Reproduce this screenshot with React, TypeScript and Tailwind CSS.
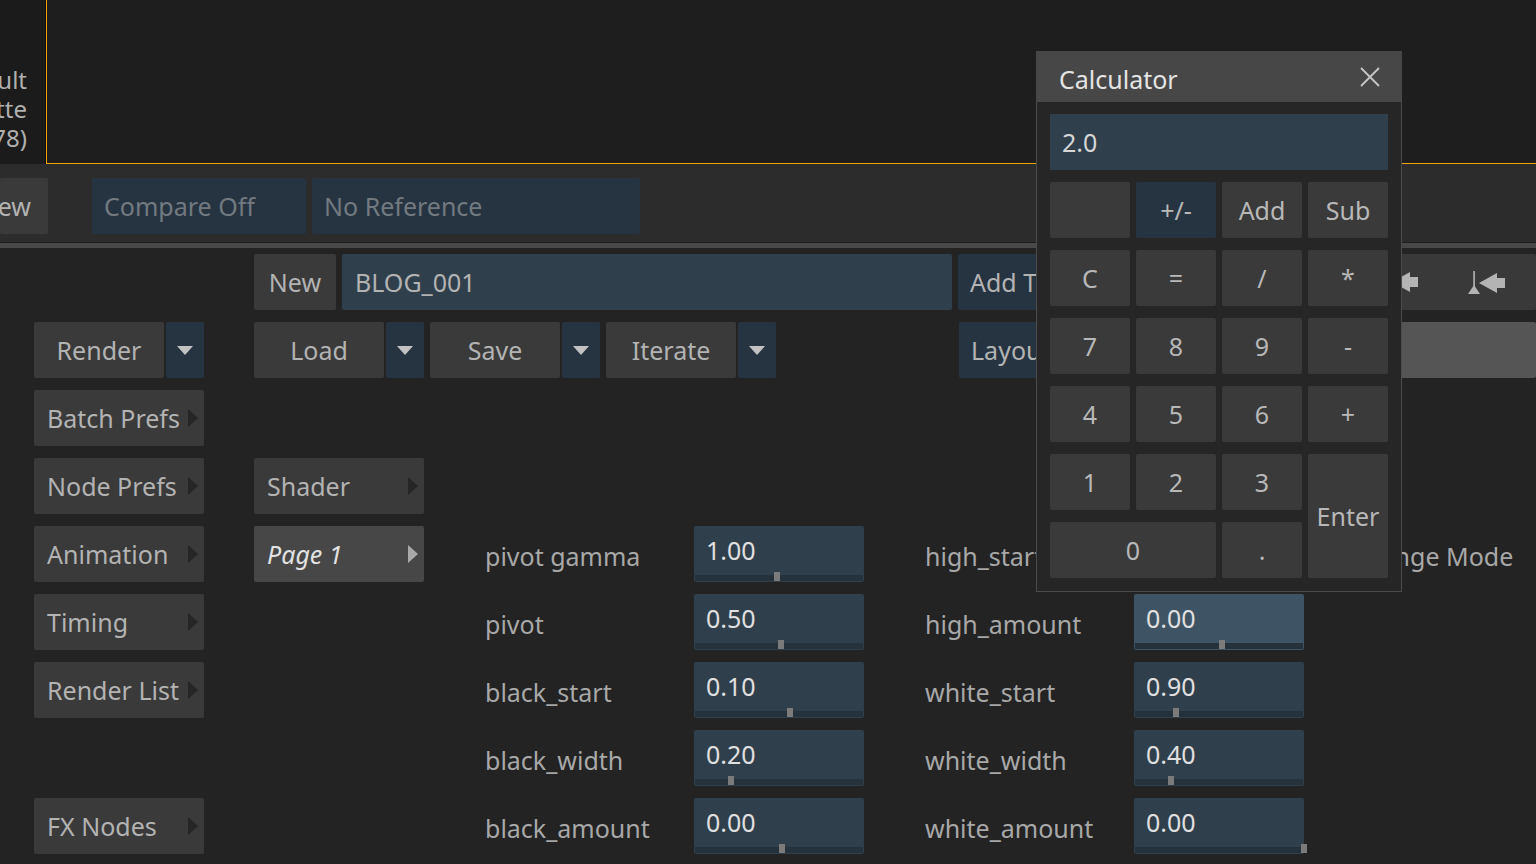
import React from 'react'

const btn = 'h-[56px] rounded-[2px] flex items-center whitespace-nowrap'

function DownTri() {
  return (
    <svg width="16" height="9" viewBox="0 0 16 9">
      <polygon points="0,0 16,0 8,9" fill="#c2c2c2" />
    </svg>
  )
}

function RightTri({ light }: { light?: boolean }) {
  return (
    <svg width="10" height="18" viewBox="0 0 10 18">
      <polygon points="0,0 10,9 0,18" fill={light ? '#a9a9a9' : '#262626'} />
    </svg>
  )
}

function Split({ label }: { label: string }) {
  return (
    <div className="flex gap-[2px] w-[170px]">
      <div className={`${btn} w-[130px] bg-[#3a3a3a] justify-center text-[#b3b3b3]`}>{label}</div>
      <div className={`${btn} w-[38px] bg-[#263442] justify-center`}>
        <DownTri />
      </div>
    </div>
  )
}

function SubMenu({ label, active }: { label: string; active?: boolean }) {
  return (
    <div
      className={`${btn} w-[170px] justify-between pl-[13px] pr-[6px] ${
        active ? 'bg-[#474747] text-[#e2e2e2] italic' : 'bg-[#3a3a3a] text-[#b3b3b3]'
      }`}
    >
      <span>{label}</span>
      <RightTri light={active} />
    </div>
  )
}

function Field({ value, tick, hi }: { value: string; tick: number; hi?: boolean }) {
  return (
    <div className={`w-[170px] h-[56px] rounded-[2px] flex flex-col ${hi ? 'bg-[#3e5464]' : 'bg-[#2f3f4b]'}`}>
      <div className="flex-1 flex items-center pl-[12px] text-[#e0e0e0]">{value}</div>
      <div className="relative h-[6px] mx-[1px] mb-[1px] bg-[#25323c]">
        <div className="absolute bottom-0 w-[6px] h-[9px] bg-[#7b7b7b]" style={{ left: tick }} />
      </div>
    </div>
  )
}

type Param = { label: string; value: string; tick: number; hi?: boolean }

const rows: {
  left?: string
  mid?: { label: string; active?: boolean }
  a?: Param
  b?: Param
  c?: string
}[] = [
  { left: 'Batch Prefs' },
  { left: 'Node Prefs', mid: { label: 'Shader' } },
  {
    left: 'Animation',
    mid: { label: 'Page 1', active: true },
    a: { label: 'pivot gamma', value: '1.00', tick: 79 },
    b: { label: 'high_start', value: '0.00', tick: 84 },
    c: 'Range Mode',
  },
  {
    left: 'Timing',
    a: { label: 'pivot', value: '0.50', tick: 83 },
    b: { label: 'high_amount', value: '0.00', tick: 84, hi: true },
  },
  {
    left: 'Render List',
    a: { label: 'black_start', value: '0.10', tick: 92 },
    b: { label: 'white_start', value: '0.90', tick: 38 },
  },
  {
    a: { label: 'black_width', value: '0.20', tick: 33 },
    b: { label: 'white_width', value: '0.40', tick: 33 },
  },
  {
    left: 'FX Nodes',
    a: { label: 'black_amount', value: '0.00', tick: 84 },
    b: { label: 'white_amount', value: '0.00', tick: 166 },
  },
]

const calcKeys = [
  ['', '+/-', 'Add', 'Sub'],
  ['C', '=', '/', '*'],
  ['7', '8', '9', '-'],
  ['4', '5', '6', '+'],
]

function Key({ k, className }: { k: string; className?: string }) {
  return (
    <div
      className={`h-[56px] rounded-[2px] flex items-center justify-center text-[#b8b8b8] ${
        k === '+/-' ? 'bg-[#263442]' : 'bg-[#3a3a3a]'
      } ${className ?? ''}`}
    >
      {k}
    </div>
  )
}

function Calculator() {
  return (
    <div className="absolute left-[1036px] top-[51px] w-[366px] bg-[#262626] border border-[#4b4b4b] border-t-0">
      {/* title */}
      <div className="h-[51px] bg-[#474747] flex items-center justify-between pl-[23px] pr-[22px] -mx-[1px]">
        <span className="text-[#e4e4e4] pt-[6px]">Calculator</span>
        <svg width="20" height="20" viewBox="0 0 20 20">
          <path d="M1 1 L19 19 M19 1 L1 19" stroke="#c6c6c6" strokeWidth="1.8" />
        </svg>
      </div>
      <div className="px-[13px] pt-[12px] pb-[13px]">
        <div className="h-[56px] bg-[#2f3f4b] flex items-center pl-[12px] text-[#d6d6d6]">2.0</div>
        <div className="mt-[12px] grid grid-cols-4 gap-x-[6px] gap-y-[12px]">
          {calcKeys.flat().map((k, i) => (
            <Key key={i} k={k} />
          ))}
          <Key k="1" />
          <Key k="2" />
          <Key k="3" />
          <Key k="Enter" className="row-span-2 h-[124px]" />
          <Key k="0" className="col-span-2" />
          <Key k="." />
        </div>
      </div>
    </div>
  )
}

export default function App() {
  return (
    <div className="relative w-[1536px] h-[864px] overflow-hidden bg-[#232323] font-['Noto_Sans',sans-serif] text-[25px] leading-none">
      {/* Viewer */}
      <div className="flex h-[164px]">
        <div className="w-[46px] bg-[#1b1b1b] border-r border-[#0f0f0f] flex flex-col items-end justify-end pb-[12px] pr-[18px] text-[24px] leading-[29px] text-[#b0b0b0] overflow-hidden whitespace-nowrap">
          <span>Result</span>
          <span>Matte</span>
          <span>(1278)</span>
        </div>
        <div className="flex-1 bg-[#1e1e1e] border-l border-b border-[#f1a300]" />
      </div>

      {/* Compare row */}
      <div className="h-[78px] bg-[#2c2c2c] flex pt-[14px] gap-[6px]">
        <div className={`${btn} w-[48px] bg-[#3a3a3a] justify-end pr-[17px] overflow-hidden text-[#b3b3b3]`}>View</div>
        <div className={`${btn} w-[214px] ml-[38px] bg-[#263442] pl-[12px] text-[#727a80]`}>Compare Off</div>
        <div className={`${btn} w-[328px] bg-[#263442] pl-[12px] text-[#727a80]`}>No Reference</div>
      </div>
      <div className="h-[12px] border-t border-[#1c1c1c] flex flex-col">
        <div className="h-[5px] bg-[#484848]" />
      </div>

      {/* Main */}
      <div className="flex flex-col gap-[12px]">
        <div className="flex gap-[6px] pl-[254px]">
          <div className={`${btn} w-[82px] bg-[#3a3a3a] justify-center text-[#b3b3b3]`}>New</div>
          <div className={`${btn} w-[610px] bg-[#2f3f4b] pl-[13px] text-[#b3b3b3]`}>BLOG_001</div>
          <div className={`${btn} w-[170px] bg-[#263442] pl-[12px] text-[#b3b3b3]`}>Add To Library</div>
          <div className={`${btn} flex-1 bg-[#393939] justify-end gap-[50px] pr-[31px]`}>
            <svg width="26" height="20" viewBox="0 0 26 20">
              <polygon points="0,10 18,0 18,5 26,5 26,15 18,15 18,20" fill="#b4b4b4" />
            </svg>
            <svg width="37" height="23" viewBox="0 0 37 23">
              <rect x="5.3" y="0" width="1.6" height="20" fill="#b4b4b4" />
              <polygon points="6,14 12,23 0,23" fill="#b4b4b4" />
              <polygon points="11,12 29,2 29,7 37,7 37,17 29,17 29,22" fill="#b4b4b4" />
            </svg>
          </div>
        </div>

        <div className="flex pl-[34px]">
          <Split label="Render" />
          <div className="flex gap-[6px] ml-[50px]">
            <Split label="Load" />
            <Split label="Save" />
            <Split label="Iterate" />
          </div>
          <div className={`${btn} w-[170px] ml-[183px] bg-[#263442] pl-[12px] text-[#b3b3b3]`}>Layout</div>
          <div className={`${btn} flex-1 ml-[6px] bg-[#555555]`} />
        </div>

        {rows.map((r, i) => (
          <div key={i} className="flex h-[56px] items-center pl-[34px] whitespace-nowrap">
            <div className="w-[170px]">{r.left && <SubMenu label={r.left} />}</div>
            <div className="w-[170px] ml-[50px]">{r.mid && <SubMenu label={r.mid.label} active={r.mid.active} />}</div>
            {r.a && (
              <>
                <div className="w-[209px] ml-[61px] text-[#a8a8a8] pt-[4px]">{r.a.label}</div>
                <Field value={r.a.value} tick={r.a.tick} />
              </>
            )}
            {r.b && (
              <>
                <div className="w-[209px] ml-[61px] text-[#a8a8a8] pt-[4px]">{r.b.label}</div>
                <Field value={r.b.value} tick={r.b.tick} hi={r.b.hi} />
              </>
            )}
            {r.c && <div className="ml-[61px] text-[#a8a8a8] pt-[4px]">{r.c}</div>}
          </div>
        ))}
      </div>

      <Calculator />
    </div>
  )
}
